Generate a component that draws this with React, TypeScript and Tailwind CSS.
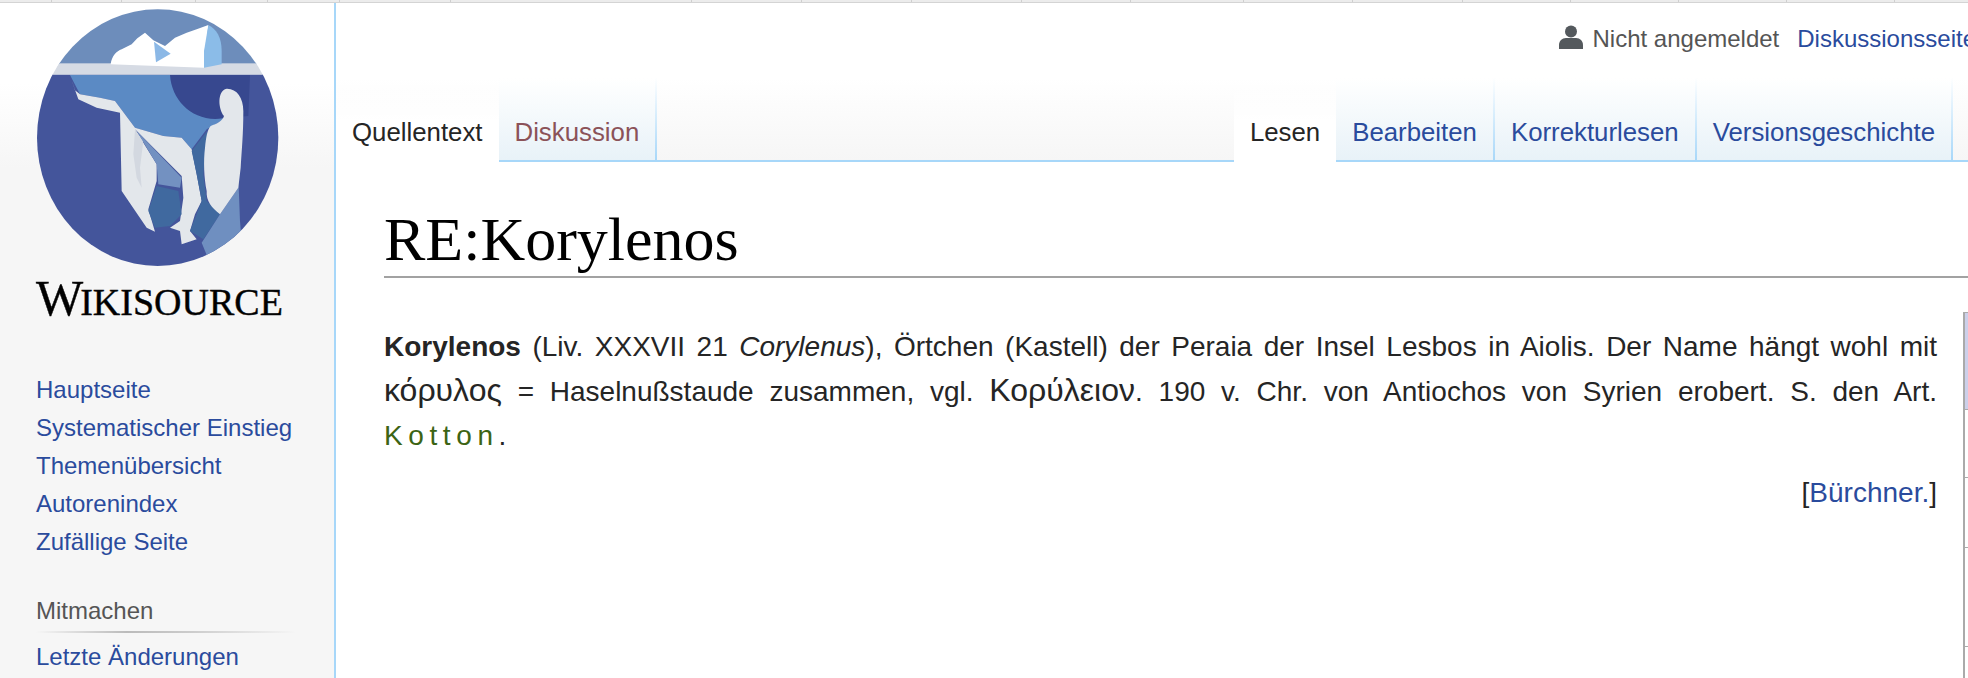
const SANS = "font-['Liberation_Sans',Arial,sans-serif]";

const TICKS = [52, 70, 74, 72, 72, 111, 241, 110, 110, 110, 109, 113, 109, 110, 108, 108, 108, 108];

const sideLinks = ["Hauptseite", "Systematischer Einstieg", "Themenübersicht", "Autorenindex", "Zufällige Seite"];

function TopStrip() {
  return (
    <div className="flex h-[3px] shrink-0 border-b border-[#d4d4d4] bg-[#ececec]">
      {TICKS.map((w, i) => (
        <div key={i} style={{ width: w }} className="shrink-0 border-r border-[#cfcfcf]" />
      ))}
    </div>
  );
}

function Logo() {
  return (
    <svg viewBox="0 6 1020 810" className="block h-[270px] w-[340px] blur-[0.5px]">
      <defs>
        <clipPath id="globe">
          <ellipse cx="473" cy="410" rx="362" ry="385" />
        </clipPath>
      </defs>
      <g clipPath="url(#globe)">
        <rect x="100" y="20" width="750" height="170" fill="#6d8dbb" />
        <rect x="100" y="220" width="750" height="600" fill="#44559b" />
        <rect x="100" y="187" width="750" height="34" fill="#d6dbe4" />
        {/* tip above the water */}
        <path d="M332 190C335 165 350 150 365 145L395 130L412 112L435 95L460 118L495 135L525 110L560 95L590 85L625 72L612 200Z" fill="#fff" />
        <path d="M462 122L512 158L468 184Z" fill="#8bb8e6" />
        <path d="M625 72C650 85 665 110 665 150L665 190L612 200L612 150Z" fill="#8bbce8" />
        {/* below the water */}
        <path d="M210 222L680 222L680 350L620 385L575 445L545 410L490 405L405 380L345 300L300 290L240 280Z" fill="#5b8ac4" />
        <path d="M510 222C515 300 580 365 668 352L745 345L750 222Z" fill="#37488f" />
        <path d="M210 225L225 268L240 280L300 290L345 300L405 380L490 405L545 410L575 445L590 520L605 600L585 640L570 690L590 715L545 730L540 690L510 680L540 660L550 590L545 525L405 385L470 490L470 540L445 625L465 692L440 680L365 570L360 335L290 320L235 295Z" fill="#e3e7eb" />
        <path d="M405 385L430 420L420 500L425 560L410 530L400 460Z" fill="#d3d8e0" />
        <path d="M410 390L545 530L540 560L475 550L470 490Z" fill="#7391c1" />
        <path d="M470 555L535 570L545 640L510 675L465 680L445 630Z" fill="#40699f" />
        <path d="M575 450L622 390L610 520L620 600L660 640L610 715L570 690L590 640L605 600L590 520Z" fill="#40699f" />
        <path d="M715 530L720 660L725 720L680 760L620 762L605 725L660 640L715 560Z" fill="#6f8fc0" />
        <path d="M680 263C710 262 730 290 730 330C730 400 725 450 722 500L715 560L660 640C635 620 618 600 620 570C612 530 610 480 615 440C618 410 622 385 632 375C650 368 668 360 672 345C655 325 650 270 680 263Z" fill="#e3e7eb" />
      </g>
    </svg>
  );
}

function Wordmark() {
  return (
    <div className="flex h-[44px] items-baseline pl-[36px] font-['Liberation_Serif',serif] leading-[44px] text-black [-webkit-text-stroke:0.4px_#111]">
      <span className="-mr-[3px] text-[50px]">W</span>
      <span className="text-[38px]">IKISOURCE</span>
    </div>
  );
}

function Sidebar() {
  return (
    <aside className="h-full w-[336px] shrink-0 border-r-[2px] border-[#a7d7f9] bg-[linear-gradient(#fff_80px,#f6f6f6_165px)]">
      <Logo />
      <div className="h-[3px]" />
      <Wordmark />
      <ul className="mt-[51px] pl-[36px] text-[24px] leading-[38px] text-[#2a4b9d]">
        {sideLinks.map((l) => (
          <li key={l}>{l}</li>
        ))}
      </ul>
      <div className="mt-[31px] ml-[36px] w-[260px]">
        <div className="text-[24px] leading-[38px] text-[#555]">Mitmachen</div>
        <div className="mt-[1px] h-[2px] bg-[linear-gradient(to_right,#f6f6f6,#bbb_35%,#ccc_60%,#f6f6f6)]" />
      </div>
      <div className="mt-[5px] pl-[36px] text-[24px] leading-[38px] text-[#2a4b9d]">Letzte Änderungen</div>
    </aside>
  );
}

function Tab({ label, selected, red }: { label: string; selected?: boolean; red?: boolean }) {
  const base = "flex h-[82px] items-end pb-[9px] px-4 text-[25.8px] leading-[38px] whitespace-nowrap";
  if (selected) {
    return <div className={`${base} -mb-[2px] h-[84px] bg-[linear-gradient(#f9fbfd00,#fff_50%)] pb-[11px] text-[#252525]`}>{label}</div>;
  }
  return (
    <div
      className={`${base} border-r-2 bg-[linear-gradient(#fff,#e8f2f8)] [border-image:linear-gradient(#fff,#a7d7f9)_1] ${
        red ? "text-[#8b5258]" : "text-[#2a4b9d]"
      }`}
    >
      {label}
    </div>
  );
}

function Article() {
  return (
    <div className="flex flex-1 items-start overflow-hidden pl-[48px]">
      <div className="w-[1553px] shrink-0">
        <p className="mt-[47px] text-justify text-[28px] leading-[44.6px] text-[#252525]">
          <b>Korylenos</b> (Liv. XXXVII 21 <i>Corylenus</i>), Örtchen (Kastell) der Peraia der Insel Lesbos in Aiolis. Der
          Name hängt wohl mit <span className="text-[32px] leading-[30px]">κόρυλος</span> = Haselnußstaude zusammen, vgl.{" "}
          <span className="text-[32px] leading-[30px]">Κορύλειον</span>. 190 v. Chr. von Antiochos von Syrien erobert. S.
          den Art. <span className="tracking-[0.2em] text-[#3c6414]">Kotton</span>.
        </p>
        <p className="mt-[12px] text-right text-[28px] leading-[44.6px] text-[#252525]">
          [<span className="text-[#2a4b9d]">Bürchner.</span>]
        </p>
      </div>
      {/* table cut off at the right edge of the window */}
      <div className="mt-[34px] ml-[26px] w-[6px] shrink-0 border-l-[2px] border-t-[1px] border-[#aaa]">
        <div className="h-[97px] border-b border-[#aaa] bg-[#ccd0ea]" />
        <div className="h-[68px] border-b border-[#aaa]" />
        <div className="h-[70px] border-b border-[#aaa]" />
        <div className="h-[99px] border-b border-[#aaa]" />
        <div className="h-[40px]" />
      </div>
    </div>
  );
}

export default function App() {
  return (
    <div className={`flex h-[678px] w-[1968px] flex-col overflow-hidden bg-white ${SANS}`}>
      <TopStrip />
      <div className="flex min-h-0 flex-1">
        <Sidebar />
        <main className="flex min-w-0 flex-1 flex-col overflow-hidden">
          <div className="-mr-[8px] flex h-[75px] shrink-0 items-start justify-end pt-[17px] text-[24px] leading-[38px]">
            <svg viewBox="0 0 24 24" className="mt-[4px] h-[26px] w-[24px] fill-[#54595d]">
              <circle cx="12" cy="6.5" r="6" />
              <path d="M0 24v-4c0-4 3-7 7-7h10c4 0 7 3 7 7v4z" />
            </svg>
            <span className="ml-[9px] text-[#555]">Nicht angemeldet</span>
            <span className="ml-[18px] text-[#2a4b9d]">Diskussionsseite</span>
          </div>
          <div className="flex shrink-0 justify-between border-b-2 border-[#a7d7f9] bg-[linear-gradient(#fff,#f6f6f6)]">
            <div className="flex">
              <Tab label="Quellentext" selected />
              <Tab label="Diskussion" red />
            </div>
            <div className="flex">
              <Tab label="Lesen" selected />
              <Tab label="Bearbeiten" />
              <Tab label="Korrekturlesen" />
              <Tab label="Versionsgeschichte" />
              <div className="w-[15px] bg-[linear-gradient(#fff,#f6f6f6)]" />
            </div>
          </div>
          <div className="ml-[48px] mt-[41px] shrink-0 border-b-2 border-[#a2a2a2] font-['Liberation_Serif',serif] text-[62px] leading-[73px] text-black">
            RE:Korylenos
          </div>
          <Article />
        </main>
      </div>
    </div>
  );
}
